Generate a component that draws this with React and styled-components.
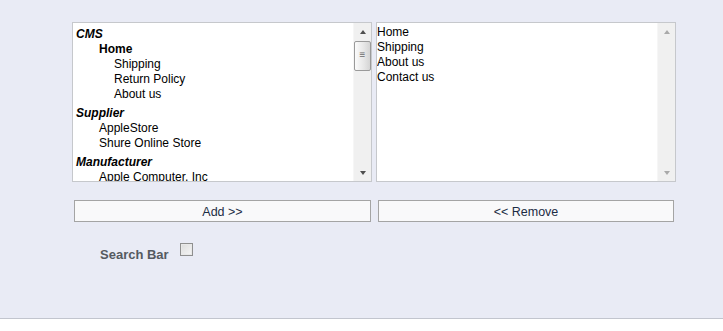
import React from "react";
import styled, { createGlobalStyle, css } from "styled-components";

const GlobalStyle = createGlobalStyle`
  html, body {
    margin: 0;
    padding: 0;
    background: #ffffff;
  }
  body {
    font-family: "Liberation Sans", Arial, sans-serif;
    font-size: 12px;
  }
`;

const leftList = [
  { type: "group", label: "CMS" },
  { label: "Home", level: 1, bold: true },
  { label: "Shipping", level: 2 },
  { label: "Return Policy", level: 2 },
  { label: "About us", level: 2 },
  { type: "group", label: "Supplier" },
  { label: "AppleStore", level: 1 },
  { label: "Shure Online Store", level: 1 },
  { type: "group", label: "Manufacturer" },
  { label: "Apple Computer, Inc", level: 1 },
];

const rightList = ["Home", "Shipping", "About us", "Contact us"];

const App = () => {
  const [searchBar, setSearchBar] = React.useState(false);

  return (
    <>
      <GlobalStyle />
      <Page>
        <ListsRow>
          <ListBox>
            <ListItems $top={4}>
              {leftList.map((item, i) =>
                item.type === "group" ? (
                  <GroupLabel key={i} $first={i === 0}>
                    {item.label}
                  </GroupLabel>
                ) : (
                  <Option key={i} $level={item.level} $bold={item.bold}>
                    {item.label}
                  </Option>
                )
              )}
            </ListItems>
            <Scrollbar thumb />
          </ListBox>
          <ListBox>
            <ListItems $top={2}>
              {rightList.map((label) => (
                <Option key={label} $level={0} $flat>
                  {label}
                </Option>
              ))}
            </ListItems>
            <Scrollbar disabled />
          </ListBox>
        </ListsRow>

        <ButtonsRow>
          <ActionButton $width={297}>Add &gt;&gt;</ActionButton>
          <ActionButton $width={296}>&lt;&lt; Remove</ActionButton>
        </ButtonsRow>

        <SearchRow>
          <SearchLabel>Search Bar</SearchLabel>
          <Check
            type="checkbox"
            checked={searchBar}
            onChange={(e) => setSearchBar(e.target.checked)}
          />
        </SearchRow>
      </Page>
    </>
  );
};

const Scrollbar = ({ thumb, disabled }) => (
  <ScrollTrackBox>
    <Arrow $up $disabled={disabled} />
    <Track>{thumb && <Thumb>≡</Thumb>}</Track>
    <Arrow $disabled={disabled} />
  </ScrollTrackBox>
);

const Page = styled.div`
  height: 319px;
  box-sizing: border-box;
  background: #e9ebf5;
  border-bottom: 1px solid #c2c5ce;
  padding: 22px 0 0 72px;
`;

const ListsRow = styled.div`
  display: flex;
  gap: 4px;
`;

const ListBox = styled.div`
  width: 300px;
  height: 160px;
  box-sizing: border-box;
  border: 1px solid #c6c8cc;
  background: #ffffff;
  display: flex;
  overflow: hidden;
`;

const ListItems = styled.div`
  flex: 1;
  padding-top: ${(p) => p.$top}px;
  overflow: hidden;
  color: #000;
  line-height: 15px;
`;

const GroupLabel = styled.div`
  font-weight: bold;
  font-style: italic;
  padding-left: 3px;
  margin-top: ${(p) => (p.$first ? 0 : 4)}px;
`;

const Option = styled.div`
  white-space: nowrap;
  padding-left: ${(p) => (p.$flat ? 0 : 3 + p.$level * 23 - (p.$level > 1 ? 8 : 0))}px;
  font-weight: ${(p) => (p.$bold ? "bold" : "normal")};
`;

const ScrollTrackBox = styled.div`
  width: 17px;
  display: flex;
  flex-direction: column;
  background: #f0f0f0;
  border-left: 1px solid #f6f6f6;
`;

const Arrow = styled.div`
  height: 17px;
  display: flex;
  align-items: center;
  justify-content: center;
  &::before {
    content: "";
    width: 0;
    height: 0;
    border-left: 3.5px solid transparent;
    border-right: 3.5px solid transparent;
    ${(p) =>
      p.$up
        ? css`
            border-bottom: 4px solid ${p.$disabled ? "#a9a9a9" : "#4e4e4e"};
          `
        : css`
            border-top: 4px solid ${p.$disabled ? "#a9a9a9" : "#4e4e4e"};
          `}
  }
`;

const Track = styled.div`
  flex: 1;
  padding: 1px 0 0 0;
`;

const Thumb = styled.div`
  height: 30px;
  box-sizing: border-box;
  border: 1px solid #9a9a9a;
  border-radius: 2px;
  background: linear-gradient(to right, #fbfbfb, #e6e6e6 60%, #d4d4d4);
  color: #6a6a6a;
  font-size: 10px;
  line-height: 26px;
  text-align: center;
`;

const ButtonsRow = styled.div`
  display: flex;
  gap: 7px;
  margin: 18px 0 0 2px;
`;

const ActionButton = styled.button`
  width: ${(p) => p.$width}px;
  height: 22px;
  box-sizing: border-box;
  border: 1px solid #a4a4a4;
  background: #f9f9fa;
  color: #1c2c44;
  font-family: "Liberation Sans", Arial, sans-serif;
  font-size: 12.5px;
  padding: 1px 0 0;
  cursor: pointer;
`;

const SearchRow = styled.div`
  display: flex;
  align-items: flex-start;
  margin: 21px 0 0 28px;
  gap: 11px;
`;

const SearchLabel = styled.span`
  font-weight: bold;
  font-size: 13px;
  color: #555a60;
  line-height: 15px;
  padding-top: 4px;
`;

const Check = styled.input`
  appearance: none;
  width: 13px;
  height: 13px;
  margin: 0;
  box-sizing: border-box;
  border: 1px solid #8f8f8f;
  background: linear-gradient(135deg, #dcdcdc, #f6f6f6);
  box-shadow: inset 0 0 0 1px #e8e8e8;
`;

export default App;
